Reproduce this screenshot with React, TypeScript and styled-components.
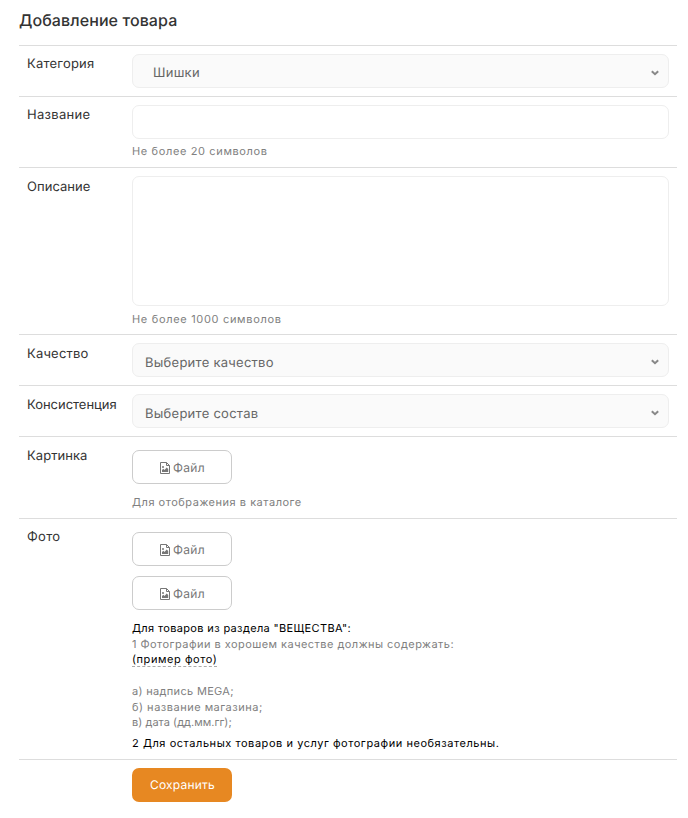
import React from "react";
import styled, { createGlobalStyle } from "styled-components";

const GlobalStyle = createGlobalStyle`
  * { box-sizing: border-box; }
  body {
    margin: 0;
    background: #fff;
    color: #333;
    font: 370 13px/18px Inter, "Noto Sans", sans-serif;
    text-rendering: geometricPrecision;
  }
`;

const Page = styled.main`
  padding: 10px 11px 0 19px;
`;

const Title = styled.h1`
  margin: 0 0 15px;
  font-size: 16px;
  line-height: 20px;
  font-weight: 480;
  letter-spacing: 0.09px;
`;

const Row = styled.div<{ $height: number }>`
  display: grid;
  grid-template-columns: 97px 1fr;
  column-gap: 8px;
  height: ${(p) => p.$height}px;
  padding: 8px 8px 0;
  border-top: 1px solid #ddd;
`;

const Label = styled.label<{ $drop?: number; $track: number }>`
  padding-top: ${(p) => p.$drop ?? 1}px;
  letter-spacing: ${(p) => p.$track}px;
  white-space: nowrap;
`;

const Field = styled.div<{ $top?: number }>`
  padding-top: ${(p) => p.$top ?? 0}px;
`;

const Tracked = styled.span<{ $track: number }>`
  letter-spacing: ${(p) => p.$track}px;
`;

const Select = styled.button<{ $indent: number; $drop: number }>`
  display: flex;
  align-items: center;
  justify-content: space-between;
  width: 100%;
  height: 34px;
  padding: 3px 9px 0 ${(p) => p.$indent}px;
  border: 1px solid #eee;
  border-radius: 7px;
  background: #fafafa;
  color: #666;
  font: inherit;
  text-rendering: inherit;
  text-align: left;

  > span { padding-top: ${(p) => p.$drop}px; }
`;

const Arrow = styled.svg`
  display: block;
  width: 8px;
  height: 6px;
`;

const Input = styled.input`
  display: block;
  width: 100%;
  height: 34px;
  padding: 6px 12px;
  border: 1px solid #eee;
  border-radius: 7px;
  background: #fff;
  font: inherit;
`;

const TextArea = styled.textarea`
  display: block;
  width: 100%;
  height: 130px;
  padding: 6px 12px;
  border: 1px solid #eee;
  border-radius: 7px;
  background: #fff;
  font: inherit;
  resize: none;
`;

const Hint = styled.p<{ $gap: number; $track?: number }>`
  margin: ${(p) => p.$gap}px 0 0;
  color: #808080;
  font-size: 11px;
  line-height: 15.7px;
  letter-spacing: ${(p) => p.$track ?? 0.3}px;
`;

const FileButton = styled.button`
  display: flex;
  align-items: center;
  justify-content: center;
  gap: 3px;
  width: 100px;
  height: 34px;
  padding: 2px 0 0 1px;
  border: 1px solid #ccc;
  border-radius: 7px;
  background: #fff;
  color: #777;
  font: inherit;
  font-size: 12px;
  letter-spacing: 0.3px;
  text-rendering: inherit;

  & + & { margin-top: 10px; }
`;

const Strong = styled(Tracked)`
  color: #000;
`;

const Example = styled.a`
  color: #000;
  letter-spacing: 0.56px;
  border-bottom: 1px dashed #aaa;
`;

const Save = styled.button`
  width: 100px;
  height: 34px;
  padding: 0 0 0 1px;
  border: 0;
  border-radius: 7px;
  background: #e78822;
  color: #fff;
  font: inherit;
  font-size: 12px;
  letter-spacing: 0.22px;
  text-rendering: inherit;
`;

const FileIcon = () => (
  <svg width="10" height="12" viewBox="0 0 10 12" fill="none" aria-hidden="true">
    <path d="M.5.5h6l3 3v8h-9zM6.5.5v3h3" stroke="currentColor" />
    <path d="M2 10V8l1.3-1.2L4.5 8l2.2-2.5L8.2 7v3z" fill="currentColor" />
    <circle cx="3" cy="5" r="1" fill="currentColor" />
  </svg>
);

type SelectBoxProps = { text: string; indent?: number; drop?: number };

const SelectBox = ({ text, indent = 12, drop = 2 }: SelectBoxProps) => (
  <Select type="button" $indent={indent} $drop={drop}>
    <Tracked $track={0.26}>{text}</Tracked>
    <Arrow viewBox="0 0 8 6" aria-hidden="true">
      <path d="M.8 1.2 4 4.2 7.2 1.2" fill="none" stroke="#888" strokeWidth="2" />
    </Arrow>
  </Select>
);

const FilePicker = () => (
  <FileButton type="button">
    <FileIcon />
    <span>Файл</span>
  </FileButton>
);

export default function App() {
  return (
    <>
      <GlobalStyle />
      <Page>
        <Title>Добавление товара</Title>
        <Row $height={51}>
          <Label $track={0.2}>Категория</Label>
          <Field><SelectBox text="Шишки" indent={20} drop={0} /></Field>
        </Row>
        <Row $height={71}>
          <Label $track={0.3}>Название</Label>
          <Field>
            <Input />
            <Hint $gap={5} $track={0.63}>Не более 20 символов</Hint>
          </Field>
        </Row>
        <Row $height={167}>
          <Label $drop={2} $track={0.05}>Описание</Label>
          <Field>
            <TextArea />
            <Hint $gap={6} $track={0.68}>Не более 1000 символов</Hint>
          </Field>
        </Row>
        <Row $height={51}>
          <Label $drop={2} $track={0.19}>Качество</Label>
          <Field><SelectBox text="Выберите качество" /></Field>
        </Row>
        <Row $height={51}>
          <Label $drop={2} $track={-0.03}>Консистенция</Label>
          <Field><SelectBox text="Выберите состав" /></Field>
        </Row>
        <Row $height={82}>
          <Label $drop={2} $track={0.06}>Картинка</Label>
          <Field $top={5}>
            <FilePicker />
            <Hint $gap={11} $track={0.52}>Для отображения в каталоге</Hint>
          </Field>
        </Row>
        <Row $height={241}>
          <Label $track={0.3}>Фото</Label>
          <Field $top={5}>
            <FilePicker />
            <FilePicker />
            <Hint $gap={11}>
              <Strong $track={0.35}>Для товаров из раздела "ВЕЩЕСТВА":</Strong><br />
              <Tracked $track={0.46}>1 Фотографии в хорошем качестве должны содержать:</Tracked><br />
              <Example>(пример фото)</Example><br />
              <br />
              <Tracked $track={0.32}>а) надпись MEGA;</Tracked><br />
              <Tracked $track={0.5}>б) название магазина;</Tracked><br />
              <Tracked $track={0.04}>в) дата (дд.мм.гг);</Tracked>
            </Hint>
            <Hint $gap={5}>
              <Strong $track={0.55}>2 Для остальных товаров и услуг фотографии необязательны.</Strong>
            </Hint>
          </Field>
        </Row>
        <Row $height={59}>
          <span />
          <Field><Save type="button">Сохранить</Save></Field>
        </Row>
      </Page>
    </>
  );
}
